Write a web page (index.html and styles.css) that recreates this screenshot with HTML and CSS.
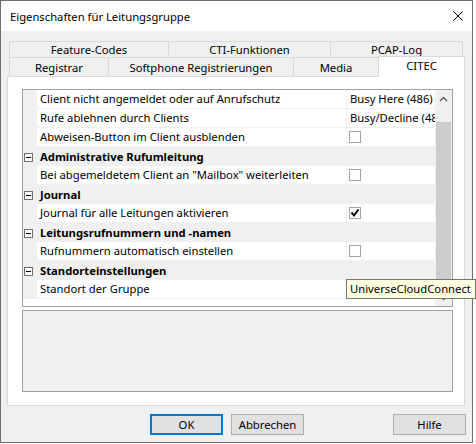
FILE: index.html
```html
<!DOCTYPE html>
<html lang="de">
<head>
<meta charset="utf-8">
<title>Eigenschaften für Leitungsgruppe</title>
<link rel="stylesheet" href="styles.css">
</head>
<body>
<div class="window">
  <div class="titlebar">
    <span class="title">Eigenschaften für Leitungsgruppe</span>
    <svg class="close" width="10" height="10" viewBox="0 0 10 10"><path d="M0.5 0.5 L9.5 9.5 M9.5 0.5 L0.5 9.5" stroke="#000" stroke-width="1" fill="none"/></svg>
  </div>
  <div class="body">
    <div class="tabs">
      <div class="tabrow back">
        <div class="tab w-fc">Feature-Codes</div>
        <div class="tab w-cti">CTI-Funktionen</div>
        <div class="tab w-pcap last">PCAP-Log</div>
      </div>
      <div class="tabrow front">
        <div class="tab w-reg">Registrar</div>
        <div class="tab w-soft">Softphone Registrierungen</div>
        <div class="tab w-media">Media</div>
        <div class="tab w-citec last active">CITEC</div>
      </div>
    </div>
    <div class="panel">
      <div class="grid">
        <div class="rows">
          <div class="row item"><div class="gutter"></div><div class="name">Client nicht angemeldet oder auf Anrufschutz</div><div class="value">Busy Here (486)</div></div>
          <div class="row item"><div class="gutter"></div><div class="name">Rufe ablehnen durch Clients</div><div class="value">Busy/Decline (486)</div></div>
          <div class="row item"><div class="gutter"></div><div class="name">Abweisen-Button im Client ausblenden</div><div class="value"><span class="check"></span></div></div>
          <div class="row cat"><div class="gutter"><span class="expander"></span></div><div class="catname">Administrative Rufumleitung</div></div>
          <div class="row item"><div class="gutter"></div><div class="name">Bei abgemeldetem Client an "Mailbox" weiterleiten</div><div class="value"><span class="check"></span></div></div>
          <div class="row cat"><div class="gutter"><span class="expander"></span></div><div class="catname">Journal</div></div>
          <div class="row item"><div class="gutter"></div><div class="name">Journal für alle Leitungen aktivieren</div><div class="value"><span class="check checked"><svg width="10" height="10" viewBox="0 0 10 10"><path d="M1.5 4.5 L4 7.5 L8.5 1.5" stroke="#000" stroke-width="2" fill="none"/></svg></span></div></div>
          <div class="row cat"><div class="gutter"><span class="expander"></span></div><div class="catname">Leitungsrufnummern und -namen</div></div>
          <div class="row item"><div class="gutter"></div><div class="name">Rufnummern automatisch einstellen</div><div class="value"><span class="check"></span></div></div>
          <div class="row cat"><div class="gutter"><span class="expander"></span></div><div class="catname">Standorteinstellungen</div></div>
          <div class="row item"><div class="gutter"></div><div class="name">Standort der Gruppe</div><div class="value"></div></div>
        </div>
        <div class="scrollbar">
          <div class="sb-btn"><svg width="9" height="6" viewBox="0 0 9 6"><path d="M1 5 L4.5 1.5 L8 5" stroke="#606060" stroke-width="1.5" fill="none"/></svg></div>
          <div class="sb-gap"></div>
          <div class="sb-thumb"></div>
          <div class="sb-btn"><svg width="9" height="6" viewBox="0 0 9 6"><path d="M1 1 L4.5 4.5 L8 1" stroke="#606060" stroke-width="1.5" fill="none"/></svg></div>
        </div>
      </div>
      <div class="desc"></div>
    </div>
    <div class="buttons">
      <div class="btn default">OK</div>
      <div class="btn cancel">Abbrechen</div>
      <div class="btn">Hilfe</div>
    </div>
  </div>
</div>
<div class="tooltip">UniverseCloudConnect</div>
</body>
</html>
```

FILE: styles.css
```css
* { box-sizing: border-box; }
body {
  margin: 0;
  background: #ffffff;
  font-family: "Noto Sans", "Liberation Sans", sans-serif;
  font-size: 11.25px;
  color: #000;
  position: relative;
  width: 476px;
  height: 444px;
  overflow: hidden;
}
.window {
  width: 473px;
  height: 443px;
  border: 1px solid #6e6e6e;
  display: flex;
  flex-direction: column;
  background: #f0f0f0;
}
.titlebar {
  height: 30px;
  background: #fff;
  display: flex;
  align-items: center;
  padding-left: 9px;
  padding-top: 1px;
  flex: none;
}
.title { flex: 1; }
.close { margin-right: 9px; margin-top: -1px; }
.body {
  flex: 1;
  padding: 10px 7px 0 6px;
  display: flex;
  flex-direction: column;
}
.tabs { margin-left: 2px; flex: none; }
.tabrow { display: flex; }
.tabrow.back { height: 16px; }
.tabrow.front { height: 19px; }
.tab {
  border-top: 1px solid #d9d9d9;
  border-left: 1px solid #d9d9d9;
  background: #f0f0f0;
  text-align: center;
  white-space: nowrap;
}
.tab.last { border-right: 1px solid #d9d9d9; }
.back .tab { height: 16px; line-height: 16px; }
.front .tab { height: 19px; line-height: 20px; }
.w-fc { width: 159px; }
.w-cti { width: 162px; }
.w-pcap { width: 133px; }
.w-reg { width: 99px; }
.w-soft { width: 185px; }
.w-media { width: 85px; }
.w-citec { width: 87px; }
.front .tab.active {
  background: #fff;
  height: 21px;
  margin-top: -1px;
  line-height: 17px;
  position: relative;
  z-index: 1;
}
.panel {
  flex: none;
  height: 330px;
  background: #fff;
  border: 1px solid #d9d9d9;
  padding: 12px 11px 13px 14px;
  display: flex;
  flex-direction: column;
}
.grid {
  height: 218px;
  border: 1px solid #a0a0a0;
  display: flex;
  flex: none;
}
.rows { width: 412px; background: #fff; }
.row { display: flex; height: 19px; }
.gutter {
  width: 14px;
  background: #f0f0f0;
  flex: none;
  display: flex;
  align-items: center;
  justify-content: flex-start;
  padding-left: 1px;
}
.name {
  width: 309px;
  flex: none;
  padding-left: 3px;
  line-height: 18px;
  border-bottom: 1px solid #f0f0f0;
  white-space: nowrap;
  overflow: hidden;
}
.value {
  width: 89px;
  flex: none;
  border-left: 1px solid #f0f0f0;
  border-bottom: 1px solid #f0f0f0;
  padding-left: 3px;
  line-height: 18px;
  white-space: nowrap;
  overflow: hidden;
  display: flex;
  align-items: center;
}
.row.cat { background: #f0f0f0; }
.catname {
  flex: 1;
  padding-left: 3px;
  line-height: 19px;
  font-weight: bold;
  white-space: nowrap;
}
.expander {
  width: 9px;
  height: 9px;
  border: 1px solid #6f6f6f;
  background: #fff;
  position: relative;
  margin-top: 1px;
}
.expander::after {
  content: "";
  position: absolute;
  left: 1px;
  top: 3px;
  width: 5px;
  height: 1px;
  background: #000;
}
.check {
  width: 12px;
  height: 12px;
  border: 1px solid #a3a3a3;
  background: #fff;
  display: flex;
  align-items: center;
  justify-content: center;
  margin-left: -1px;
  margin-top: -1px;
}
.scrollbar {
  width: 17px;
  background: #f0f0f0;
  display: flex;
  flex-direction: column;
  flex: none;
}
.sb-btn {
  height: 17px;
  display: flex;
  align-items: center;
  justify-content: center;
  flex: none;
}
.sb-gap { height: 15px; flex: none; }
.sb-thumb {
  height: 167px;
  background: #cdcdcd;
  margin: 0 1px 0 1px;
  flex: none;
}
.desc {
  margin-top: 3px;
  height: 82px;
  border: 1px solid #a0a0a0;
  background: #f0f0f0;
  flex: none;
}
.buttons {
  display: flex;
  justify-content: flex-end;
  margin-top: 8px;
  margin-right: -1px;
}
.btn {
  width: 73px;
  height: 21px;
  border: 1px solid #adadad;
  background: #e1e1e1;
  text-align: center;
  line-height: 19px;
}
.btn.default { border: 2px solid #0078d7; line-height: 17px; margin-right: 8px; }
.btn.cancel { margin-right: 89px; }
.tooltip {
  position: absolute;
  left: 346px;
  top: 279px;
  width: 130px;
  height: 20px;
  border: 1px solid #767676;
  background: #ffffe1;
  padding-left: 3px;
  line-height: 18px;
  white-space: nowrap;
  z-index: 5;
}
```
